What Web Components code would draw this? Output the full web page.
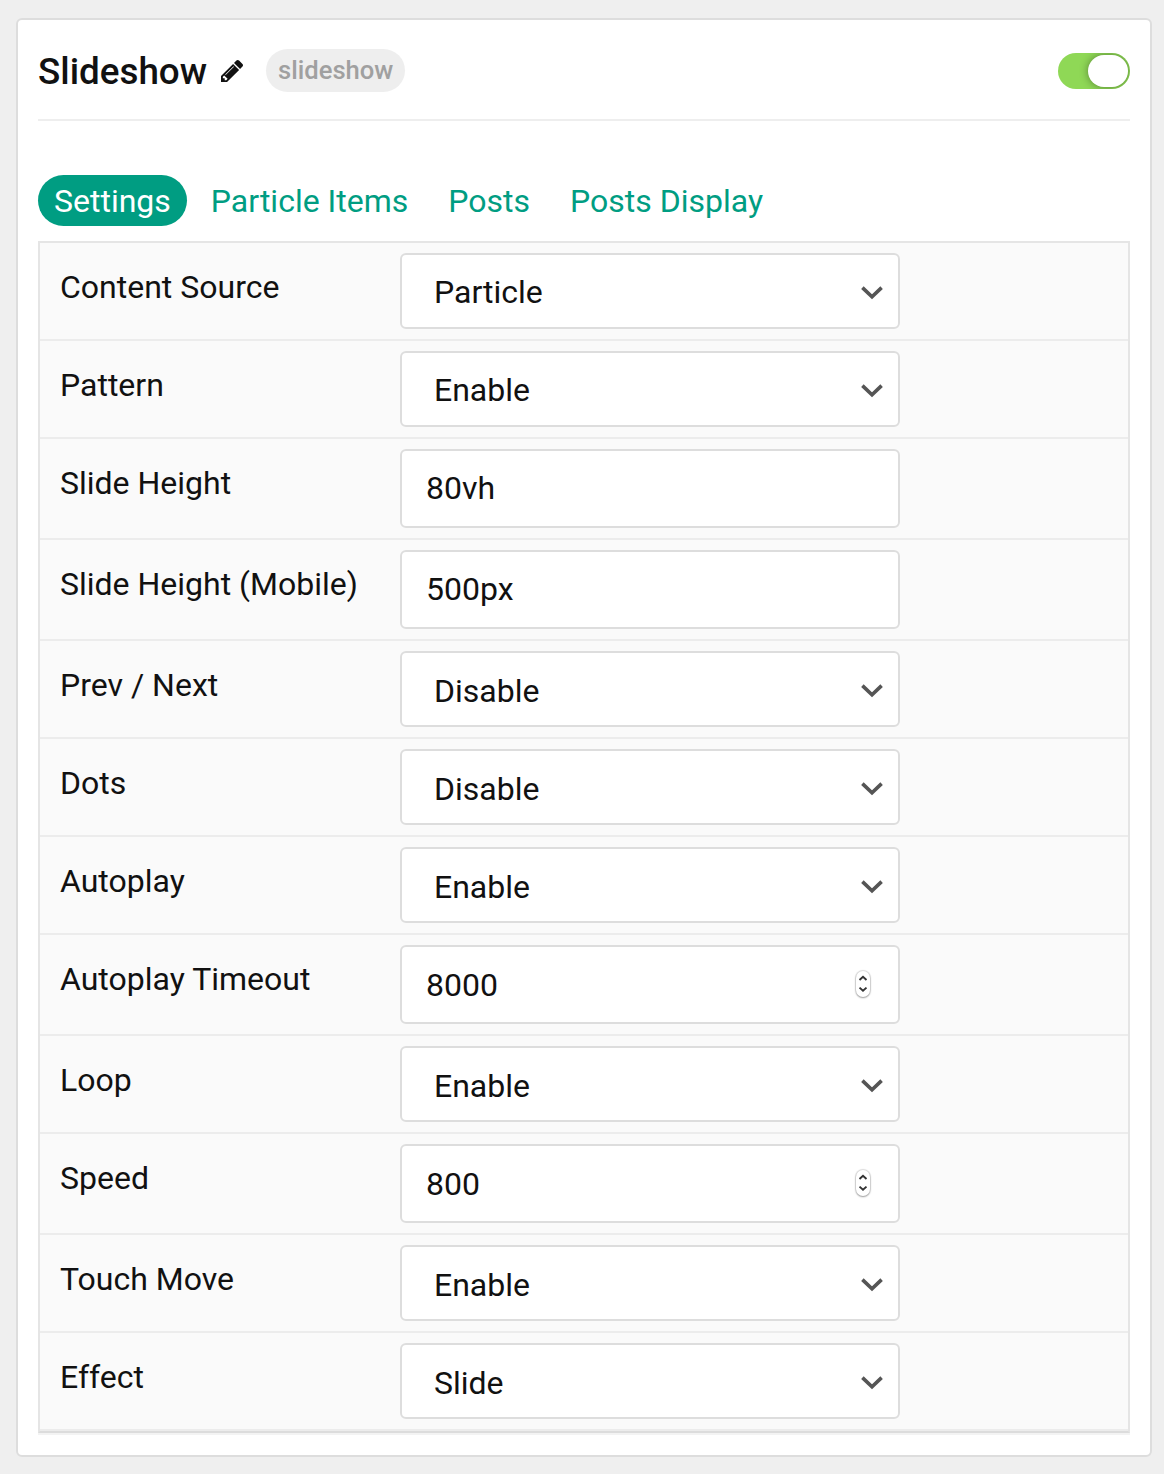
<!DOCTYPE html>
<html lang="en">
<head>
<meta charset="utf-8">
<title>Slideshow</title>
<style>
html,body{margin:0;background:#efefef}
body{font-family:Roboto,sans-serif;font-size:32px;line-height:48px;color:#111;height:1474px;box-sizing:border-box;padding:18px 12px 17px 16px;overflow:hidden}
setting-row:nth-child(n+5){--text-drop:2px}
</style>
</head>
<body>
<particle-card>
  <card-header slot="header" badge="slideshow">Slideshow</card-header>
  <tab-bar>
    <tab-item active>Settings</tab-item>
    <tab-item>Particle Items</tab-item>
    <tab-item>Posts</tab-item>
    <tab-item>Posts Display</tab-item>
  </tab-bar>
  <settings-panel>
    <setting-row label="Content Source"><select-field>Particle</select-field></setting-row>
    <setting-row label="Pattern"><select-field>Enable</select-field></setting-row>
    <setting-row label="Slide Height"><text-field>80vh</text-field></setting-row>
    <setting-row label="Slide Height (Mobile)"><text-field>500px</text-field></setting-row>
    <setting-row label="Prev / Next"><select-field>Disable</select-field></setting-row>
    <setting-row label="Dots"><select-field>Disable</select-field></setting-row>
    <setting-row label="Autoplay"><select-field>Enable</select-field></setting-row>
    <setting-row label="Autoplay Timeout"><text-field number>8000</text-field></setting-row>
    <setting-row label="Loop"><select-field>Enable</select-field></setting-row>
    <setting-row label="Speed"><text-field number>800</text-field></setting-row>
    <setting-row label="Touch Move"><select-field>Enable</select-field></setting-row>
    <setting-row label="Effect"><select-field>Slide</select-field></setting-row>
  </settings-panel>
</particle-card>
<script>
const define = (name, render) => customElements.define(name, class extends HTMLElement {
  constructor() { super(); this.attachShadow({ mode: 'open' }); }
  connectedCallback() { this.shadowRoot.innerHTML = render(this); }
});

define('particle-card', () => `
<style>
:host{display:block;box-sizing:border-box;height:1439px;background:#fff;border:2px solid #ddd;border-radius:6px;padding:0 20px}
</style>
<slot name="header"></slot><slot></slot>`);

define('card-header', el => `
<style>
:host{display:flex;align-items:center;height:101px;box-sizing:border-box;border-bottom:2px solid #eee;margin-bottom:54px}
.title{font-size:36.8px;font-weight:500;line-height:48px;margin-top:5px}
svg{display:block;width:22px;height:22px;margin:3px 23px 0 14px}
.badge{box-sizing:border-box;height:43px;line-height:43px;border-radius:22px;background:#eee;color:#a0a0a0;font-size:25.6px;font-weight:500;padding:0 12px;margin-top:2px}
toggle-switch{margin:3px 0 0 auto}
</style>
<span class="title"><slot></slot></span>
<svg viewBox="128 149 1515 1515" fill="#111"><path d="M491 1536l91-91-235-235-91 91v107h128v128h107zm523-928q0-22-22-22-10 0-17 7l-542 542q-7 7-7 17 0 22 22 22 10 0 17-7l542-542q7-7 7-17zm-54-192l416 416-832 832h-416v-416zm683 96q0 53-37 90l-166 166-416-416 166-165q36-38 90-38 53 0 91 38l235 234q37 39 37 91z"/></svg>
<span class="badge">${el.getAttribute('badge')}</span>
<toggle-switch></toggle-switch>`);

define('toggle-switch', () => `
<style>
:host{display:flex;justify-content:flex-end;box-sizing:border-box;width:72px;height:36px;padding:2px;border-radius:18px;background:#8fd856;overflow:hidden}
i{width:40px;height:32px;border-radius:16px;background:#fff;box-shadow:0 0 8px rgba(0,0,0,.4)}
</style><i></i>`);

define('tab-bar', () => `
<style>:host{display:flex;gap:8px;height:51px;margin-bottom:15px}</style><slot></slot>`);

define('tab-item', () => `
<style>
:host{display:block;padding:0 16px;height:51px;line-height:52px;border-radius:26px;color:#009d82;white-space:nowrap}
:host([active]){background:#009d82;color:#fff}
</style><slot></slot>`);

define('settings-panel', () => `
<style>
:host{display:block;border:2px solid #e5e5e5;border-bottom-color:#dcdcdc;box-shadow:0 2px 0 #f3f3f3;background:#fafafa}
</style><slot></slot>`);

define('setting-row', el => `
<style>
:host{display:flex;align-items:flex-start;padding:10px 20px;border-bottom:2px solid #ececec}
.label{width:340px;line-height:48px;padding-top:10px;white-space:nowrap}
</style>
<span class="label">${el.getAttribute('label')}</span><slot></slot>`);

define('select-field', () => `
<style>
:host{display:flex;align-items:center;justify-content:space-between;box-sizing:border-box;width:500px;height:76px;border:2px solid #ddd;border-radius:6px;background:#fff;padding:2px 14px 0 32px}
span{padding-top:var(--text-drop,0px)}
svg{display:block;width:24px;height:16px;margin-top:2px}
</style>
<span><slot></slot></span>
<svg viewBox="0 0 24 16" fill="none" stroke="#555" stroke-width="3.6"><path d="M2.4 2.6L12 11.8L21.6 2.6"/></svg>`);

define('text-field', el => `
<style>
:host{display:flex;align-items:center;justify-content:space-between;box-sizing:border-box;width:500px;height:79px;border:2px solid #ddd;border-radius:6px;background:#fff;padding:0 28px 1px 24px}
span{padding-top:var(--text-drop,0px)}
svg{display:block;width:14px;height:26px;border-radius:7px;box-shadow:0 0 1px 1px rgba(0,0,0,.13),0 1px 2px rgba(0,0,0,.3);background:#fff}
</style>
<span><slot></slot></span>
${el.hasAttribute('number') ? '<svg viewBox="0 0 14 26" fill="none" stroke="#333" stroke-width="1.9"><path d="M3.5 9L7 5.8L10.5 9M3.5 16.6L7 19.8L10.5 16.6"/></svg>' : ''}`);
</script>
</body>
</html>
